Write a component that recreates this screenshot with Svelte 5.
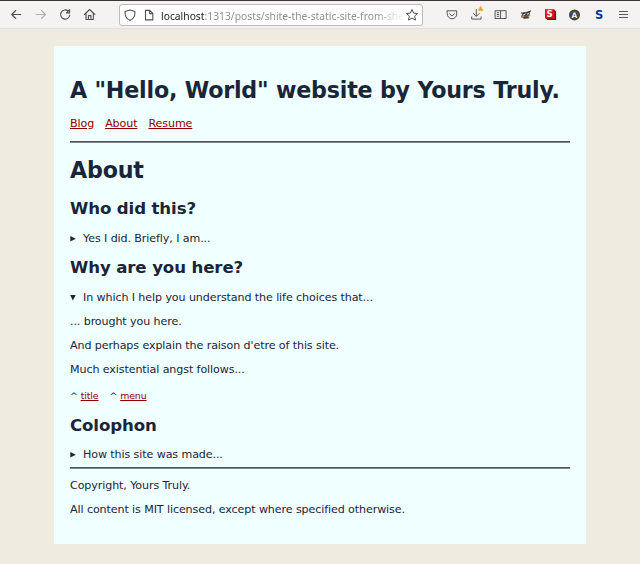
<script>
  const nav = ['Blog', 'About', 'Resume'];
  const address = { host: 'localhost', rest: ':1313/posts/shite-the-static-site-from-she' };
</script>

<div class="window">
  <header class="toolbar">
    <svg class="nav-icons" width="110" height="26" viewBox="0 3 110 26" fill="none" stroke="#505050" stroke-width="1.1" stroke-linecap="round" stroke-linejoin="round">
      <path d="M20.7 15.5H12M15.7 11.5l-4 4 4 4" />
      <path d="M36.2 15.5h9M41.5 11.5l4 4-4 4" stroke="#b0b0b0" />
      <path d="M68.4 12.2A4.6 4.6 0 1 0 69.8 16M69.6 10.6v3.3h-3.2z" />
      <path d="M84.5 15.5l5.1-5 5.2 5M86 14.4v6.1h7.3v-6.1M88.4 20.2v-3.6h2.5v3.6" />
    </svg>

    <div class="address">
      <svg width="36" height="20" viewBox="120 5 36 20" fill="none" stroke="#505050" stroke-width="1.1" stroke-linejoin="round">
        <path d="M130 10l4.9 1.6c.3 4.2-1.2 7.3-4.9 9-3.7-1.7-5.2-4.8-4.9-9z" />
        <path d="M145.5 10.4h4.3l3 3v6.5h-7.3zM149.6 10.4v3.2h3.2" />
      </svg>
      <div class="url"><span>{address.host}</span>{address.rest}</div>
      <svg width="14" height="14" viewBox="0 0 14 14" fill="none" stroke="#505050" stroke-width="1" stroke-linejoin="round">
        <path d="M7 1.5l1.6 3.6 3.9.4-2.9 2.6.9 4L7 10.1l-3.5 2 .9-4-2.9-2.6 3.9-.4z" />
      </svg>
    </div>

    <svg class="tools" width="200" height="26" viewBox="440 3 200 26" fill="none" stroke="#585858" stroke-width="1" stroke-linecap="round" stroke-linejoin="round">
      <path d="M447.3 11.8h9.4v3.3a4.7 4.7 0 0 1-9.4 0zM449.5 14.7l2.5 2.3 2.5-2.3" />
      <path d="M476.3 10.5v6.5M473.4 14.5l2.9 2.9 2.9-2.9M471.7 17.9v2.2h9.4v-2.2" />
      <path d="M478.4 11.2l2.2-3.7 2.2 3.7z" fill="#ff9a28" stroke="#ff9a28" stroke-width=".7" />
      <path d="M495.5 11.7h10.6v7.8h-10.6zM500.6 11.7v7.8M497.2 13.7h1.6M497.2 15.5h1.6M497.2 17.3h1.6" />
      <path d="M520.8 17.8l2.4-4.6 7.3-1-.8 3.5-1.8 3.4-4.4.2z" fill="#6b5a4e" stroke="none" />
      <path d="M521.3 14l3.2.3M527.6 13.2l3-1.2M524 19.2l4.8-.4M525 16.5l2-1.5" stroke="#29292a" />
      <path d="M521.2 18.2l2.5-1M528.6 17.6l1.5-1.2" stroke="#d98a4d" />
      <path d="M523.6 15.8l1.4-.5M527.6 15l.8-.4" stroke="#fff" stroke-width=".9" />
      <path d="M546 11.2l8.7-.3 1.4 1.5v8.6h-8.6l-1.5-1.5z" fill="#850a12" stroke="none" />
      <path d="M545 10.2h9.4v9.2H545z" fill="#e3131f" stroke="none" />
      <text x="546.5" y="18" font-size="8.5" fill="#fff">S</text>
      <circle cx="574.5" cy="15.9" r="5.5" fill="#454545" stroke="none" />
      <text x="571.6" y="18.7" font-size="7.5" fill="#eee">A</text>
      <text x="594.9" y="19.7" font-size="11.5" fill="#07398e">S</text>
      <path d="M619.5 12.5h8M619.5 15.5h8M619.5 18.5h8" />
    </svg>
  </header>

  <main>
    <h1 class="title">A "Hello, World" website by Yours Truly.</h1>
    <nav>{#each nav as item}<a href="#{item}">{item}</a>{/each}</nav>
    <hr />
    <h1 class="about">About</h1>
    <h2>Who did this?</h2>
    <div class="summary"><svg width="6" height="7"><path d="M.3 1L5.8 3.7.3 6.4z" /></svg>Yes I did. Briefly, I am...</div>
    <h2>Why are you here?</h2>
    <div class="summary open"><svg width="6" height="7"><path d="M.1 1h5.6L2.9 6.4z" /></svg>In which I help you understand the life choices that...</div>
    <p>... brought you here.</p>
    <p>And perhaps explain the raison d'etre of this site.</p>
    <p>Much existential angst follows...</p>
    <div class="jumps"><span>^ <a href="#title">title</a></span><span>^ <a href="#menu">menu</a></span></div>
    <h2>Colophon</h2>
    <div class="summary last"><svg width="6" height="7"><path d="M.3 1L5.8 3.7.3 6.4z" /></svg>How this site was made...</div>
    <hr />
    <footer>
      <p>Copyright, Yours Truly.</p>
      <p>All content is MIT licensed, except where specified otherwise.</p>
    </footer>
  </main>
</div>

<style>
  :global(body) { margin: 0; background: #f0ebe0; }
  .window {
    box-sizing: border-box;
    height: 564px;
    overflow: hidden;
    background: #f0ebe0;
    color: #192539;
    font: 11.1px/24px "DejaVu Sans", sans-serif;
    letter-spacing: -0.1px;
  }
  .toolbar {
    box-sizing: border-box;
    display: flex;
    align-items: center;
    height: 29px;
    margin-bottom: 17px;
    background: #f4f3f2;
    border-top: 1px solid #3b3637;
    border-bottom: 1px solid #e2e0dd;
    letter-spacing: 0;
  }
  .toolbar svg { flex: none; display: block; }
  .nav-icons, .tools { margin-top: 1px; }
  .toolbar text { font-family: "DejaVu Sans", sans-serif; font-weight: bold; stroke: none; }
  .address {
    box-sizing: border-box;
    display: flex;
    align-items: center;
    width: 304px;
    height: 22px;
    margin: 1px 17px 0 9px;
    padding-right: 3px;
    border: 1px solid #bdbbb9;
    border-radius: 3px;
    background: #fff;
  }
  .url {
    flex: 1;
    margin-left: 5px;
    margin-right: 1px;
    white-space: nowrap;
    color: #909090;
    font: 10.3px/20px "Noto Sans", sans-serif;
    padding-top: 1px;
    mask-image: linear-gradient(to right, #000 88%, transparent);
  }
  .url span { color: #222; }
  main {
    box-sizing: border-box;
    width: 532px;
    height: 498px;
    margin-left: 54px;
    padding: 26px 16px 0;
    background: #f0ffff;
  }
  h1, h2, p { margin: 0; }
  h1 { font-size: 22.2px; line-height: 36px; white-space: nowrap; letter-spacing: -0.2px; }
  h2 { font-size: 16.6px; line-height: 30px; height: 30px; letter-spacing: -0.12px; }
  nav { display: flex; gap: 11px; margin-top: 4px; height: 29px; }
  a { color: #900000; }
  hr { height: 2px; margin: 0; border: 0; background: linear-gradient(#515357 50%, #7d8586 50%); }
  .about { margin-top: 9px; height: 42px; }
  .summary { display: flex; align-items: center; height: 29px; }
  .summary svg { margin-right: 7px; fill: #192539; }
  .open { margin-bottom: -2px; }
  .jumps { display: flex; gap: 11px; height: 26px; padding-top: 3px; font-size: 9.4px; line-height: 22px; letter-spacing: -0.1px; }
  .last { height: 26px; padding-top: 1px; box-sizing: border-box; }
  footer { padding-top: 5px; }
</style>
